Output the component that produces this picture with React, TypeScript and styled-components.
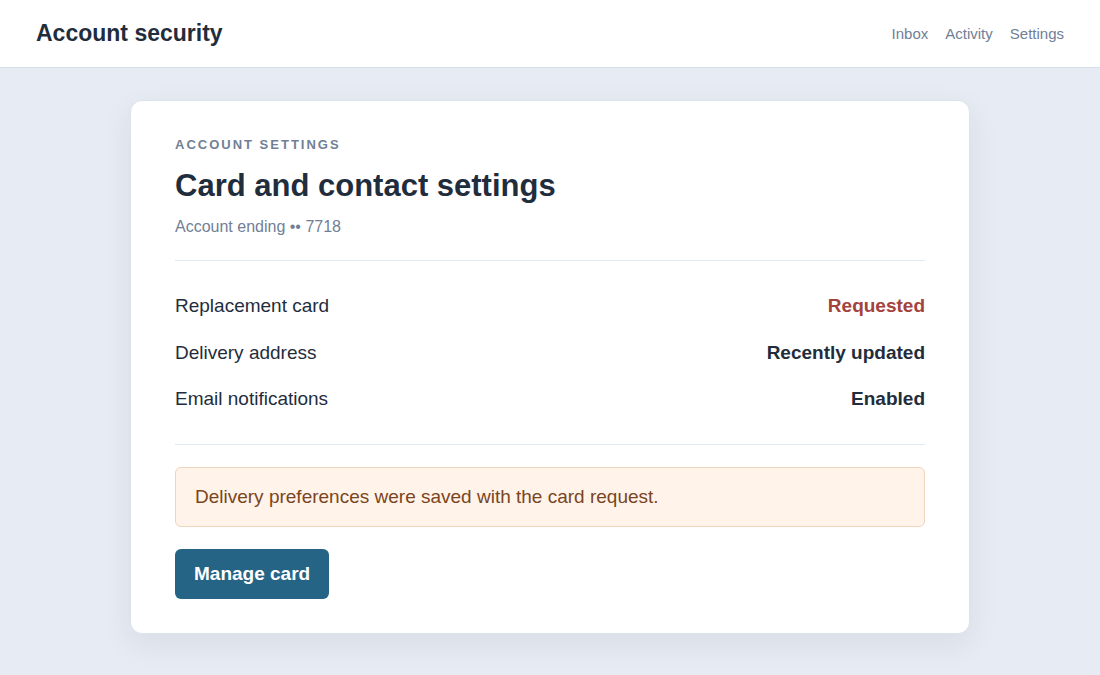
import styled, { createGlobalStyle } from "styled-components";

const GlobalStyle = createGlobalStyle`
  * { box-sizing: border-box; }
  body {
    margin: 0;
    background: #e7ebf3;
    font-family: "Liberation Sans", Arial, sans-serif;
    color: #1f2d3d;
  }
`;

const Header = styled.header`
  height: 68px;
  background: #fff;
  border-bottom: 1px solid #d8dee8;
  display: flex;
  align-items: center;
  justify-content: space-between;
  padding: 0 36px 1px;
`;

const Title = styled.h1`
  margin: 0;
  font-size: 23px;
  font-weight: bold;
  color: #1f2d3d;
`;

const Nav = styled.nav`
  display: flex;
  gap: 17px;
`;

const NavLink = styled.a`
  font-size: 15px;
  color: #718096;
  text-decoration: none;
`;

const Main = styled.main`
  display: flex;
  justify-content: center;
  padding: 32px 0 40px;
`;

const Card = styled.section`
  width: 840px;
  background: #fff;
  border: 1px solid #dde3ec;
  border-radius: 12px;
  box-shadow: 0 10px 30px rgba(30, 45, 80, 0.08);
  padding: 36px 44px 34px;
`;

const Eyebrow = styled.div`
  font-size: 13px;
  line-height: 16px;
  font-weight: bold;
  letter-spacing: 2px;
  text-transform: uppercase;
  color: #718096;
`;

const Heading = styled.h2`
  margin: 15px 0 0;
  font-size: 31px;
  line-height: 36px;
  font-weight: bold;
  color: #1f2d3d;
`;

const Sub = styled.p`
  margin: 13px 0 0;
  font-size: 16px;
  line-height: 20px;
  color: #718096;
`;

const Divider = styled.hr<{ $top: number; $bottom: number }>`
  border: 0;
  border-top: 1px solid #e2e8f0;
  margin: ${(p) => `${p.$top}px 0 ${p.$bottom}px`};
`;

const List = styled.div`
  display: flex;
  flex-direction: column;
  gap: 24.5px;
`;

const Row = styled.div`
  display: flex;
  justify-content: space-between;
  align-items: center;
  font-size: 19px;
  line-height: 22px;
`;

const Label = styled.span`
  color: #1f2d3d;
`;

const Value = styled.span<{ $tone?: "alert" }>`
  font-weight: bold;
  color: ${(p) => (p.$tone === "alert" ? "#a4423d" : "#1f2d3d")};
`;

const Notice = styled.div`
  background: #fff3ea;
  border: 1px solid #efd3bb;
  border-radius: 6px;
  padding: 17px 19px 18px;
  font-size: 19px;
  line-height: 23px;
  color: #7a4521;
`;

const Button = styled.button`
  margin-top: 22px;
  height: 50px;
  padding: 0 19px;
  border: 0;
  border-radius: 6px;
  background: #256485;
  color: #fff;
  font-family: inherit;
  font-size: 19px;
  font-weight: bold;
  cursor: pointer;
`;

const rows = [
  { label: "Replacement card", value: "Requested", tone: "alert" as const },
  { label: "Delivery address", value: "Recently updated" },
  { label: "Email notifications", value: "Enabled" },
];

export default function App() {
  return (
    <>
      <GlobalStyle />
      <Header>
        <Title>Account security</Title>
        <Nav>
          <NavLink href="#">Inbox</NavLink>
          <NavLink href="#">Activity</NavLink>
          <NavLink href="#">Settings</NavLink>
        </Nav>
      </Header>
      <Main>
        <Card>
          <Eyebrow>Account settings</Eyebrow>
          <Heading>Card and contact settings</Heading>
          <Sub>Account ending •• 7718</Sub>
          <Divider $top={23} $bottom={34} />
          <List>
            {rows.map((r) => (
              <Row key={r.label}>
                <Label>{r.label}</Label>
                <Value $tone={r.tone}>{r.value}</Value>
              </Row>
            ))}
          </List>
          <Divider $top={34} $bottom={22} />
          <Notice>Delivery preferences were saved with the card request.</Notice>
          <Button>Manage card</Button>
        </Card>
      </Main>
    </>
  );
}
